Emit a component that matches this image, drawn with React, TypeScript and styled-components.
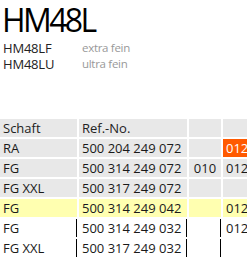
import React from "react";
import styled, { createGlobalStyle } from "styled-components";

type Row = {
    shaft: string;
    ref: string;
    size?: string;
    code?: string;
    tone: "grey" | "yellow" | "plain";
    hot?: boolean;
};

const variants = [
    { name: "HM48LF", note: "extra fein" },
    { name: "HM48LU", note: "ultra fein" },
];

const rows: Row[] = [
    { shaft: "RA", ref: "500 204 249 072", code: "012", tone: "grey", hot: true },
    { shaft: "FG", ref: "500 314 249 072", size: "010", code: "012", tone: "grey" },
    { shaft: "FG XXL", ref: "500 317 249 072", tone: "grey" },
    { shaft: "FG", ref: "500 314 249 042", code: "012", tone: "yellow" },
    { shaft: "FG", ref: "500 314 249 032", code: "012", tone: "plain" },
    { shaft: "FG XXL", ref: "500 317 249 032", tone: "plain" },
];

const App: React.FC = () => {
    return (
        <Page>
            <GlobalStyle />
            <Title>HM48L</Title>
            <Variants>
                {variants.map((v) => (
                    <VariantRow key={v.name}>
                        <VariantName>{v.name}</VariantName>
                        <VariantNote>{v.note}</VariantNote>
                    </VariantRow>
                ))}
            </Variants>
            <Table>
                <thead>
                    <tr>
                        <Head>Schaft</Head>
                        <Head>Ref.-No.</Head>
                        <Head />
                        <Head />
                    </tr>
                </thead>
                <tbody>
                    {rows.map((r, i) => (
                        <tr key={i}>
                            <Cell $tone={r.tone} $ruled>{r.shaft}</Cell>
                            <Cell $tone={r.tone} $ruled>{r.ref}</Cell>
                            <Cell $tone={r.tone} $ruled $center>{r.size}</Cell>
                            <Cell $tone={r.hot ? "hot" : r.tone}>{r.code}</Cell>
                        </tr>
                    ))}
                </tbody>
            </Table>
        </Page>
    );
};

export default App;

const GlobalStyle = createGlobalStyle`
    html, body {
        margin: 0;
        padding: 0;
        background: #fff;
        overflow: hidden;
    }
    body {
        font-family: "Open Sans", "DejaVu Sans", sans-serif;
        color: #1a1a1a;
    }
`;

const Page = styled.div`
    width: 247px;
    height: 278px;
    overflow: hidden;
`;

const Title = styled.h1`
    margin: 0;
    padding: 0 0 0 2px;
    font-size: 32px;
    font-weight: 400;
    line-height: 40px;
    letter-spacing: -2.6px;
    color: #000;
`;

const Variants = styled.div`
    display: flex;
    flex-direction: column;
    padding-left: 3px;
    font-size: 13px;
    line-height: 16px;
`;

const VariantRow = styled.div`
    display: flex;
    height: 16px;
`;

const VariantName = styled.span`
    width: 79px;
    color: #222;
    letter-spacing: -0.2px;
`;

const VariantNote = styled.span`
    color: #999;
    font-size: 11.5px;
    letter-spacing: -0.3px;
`;

const Table = styled.table`
    margin: 45px 0 0 -2px;
    border-collapse: separate;
    border-spacing: 2px;
    font-size: 13px;
    table-layout: fixed;
    width: 300px;

    th:nth-child(1), td:nth-child(1) { width: 77px; }
    th:nth-child(2), td:nth-child(2) { width: 108px; }
    th:nth-child(3), td:nth-child(3) { width: 32px; }
`;

const Head = styled.th`
    height: 18px;
    padding: 0 0 0 3px;
    box-sizing: border-box;
    background: #e8e8e8;
    font-weight: 400;
    text-align: left;
    color: #222;
    white-space: nowrap;
    line-height: 18px;
`;

const tones: Record<string, string> = {
    grey: "#e8e8e8",
    yellow: "#ffffb0",
    plain: "transparent",
    hot: "#ff5a00",
};

const Cell = styled.td<{ $tone: string; $ruled?: boolean; $center?: boolean }>`
    height: 18px;
    padding: 0 0 0 ${(p) => (p.$center ? "0" : "3px")};
    box-sizing: border-box;
    background: ${(p) => tones[p.$tone]};
    color: ${(p) => (p.$tone === "hot" ? "#fff" : "#1a1a1a")};
    text-align: ${(p) => (p.$center ? "center" : "left")};
    white-space: nowrap;
    line-height: 18px;
    border-right: ${(p) => (p.$ruled && p.$tone === "plain" ? "1px solid #000" : "none")};
`;
